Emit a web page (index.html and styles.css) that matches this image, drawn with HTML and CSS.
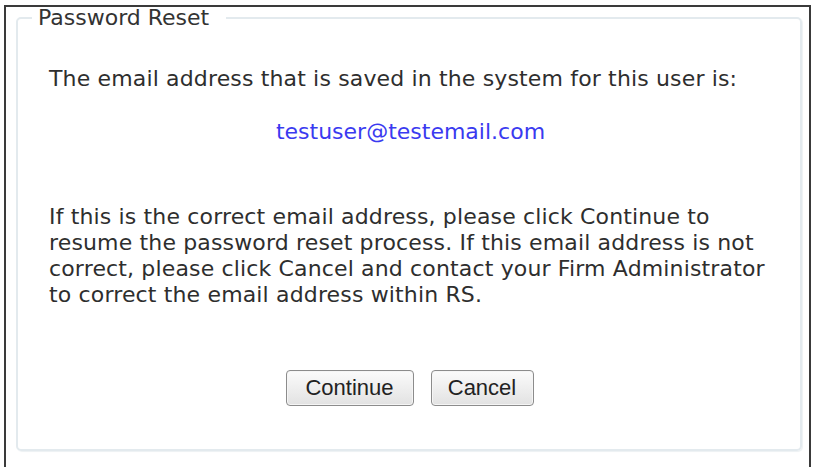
FILE: index.html
```html
<!DOCTYPE html>
<html lang="en">
<head>
<meta charset="utf-8">
<title>Password Reset</title>
<link rel="stylesheet" href="styles.css">
</head>
<body>
<div class="frame">
  <fieldset class="panel">
    <legend class="panel-title">Password Reset</legend>
    <p class="intro">The email address that is saved in the system for this user is:</p>
    <p class="email">testuser@testemail.com</p>
    <p class="notice">If this is the correct email address, please click Continue to<br>resume the password reset process. If this email address is not<br>correct, please click Cancel and contact your Firm Administrator<br>to correct the email address within RS.</p>
    <div class="actions">
      <button class="btn btn-continue" type="button">Continue</button>
      <button class="btn btn-cancel" type="button">Cancel</button>
    </div>
  </fieldset>
</div>
</body>
</html>
```

FILE: styles.css
```css
html, body {
  margin: 0;
  padding: 0;
  background: #ffffff;
}

body {
  font-family: "DejaVu Sans", Verdana, sans-serif;
  color: #2e2e2e;
  overflow: hidden;
}

.frame {
  margin: 5px 0 0 4px;
  width: 807px;
  height: 470px;
  border: 2px solid #3a3a3a;
  border-bottom: none;
  box-sizing: border-box;
  padding: 0 10px 0 10px;
}

.panel {
  margin: 0;
  width: 786px;
  height: 444px;
  box-sizing: border-box;
  border: 2px solid #e3eaee;
  border-radius: 5px;
  box-shadow: 1px 1px 1px #edf1f3;
  padding: 0 28px 0 31px;
}

.panel-title {
  font-size: 22px;
  color: #333333;
  padding: 0 17px 0 6px;
  margin-left: -17px;
  line-height: 22px;
}

.intro,
.email,
.notice {
  font-size: 22px;
  line-height: 26px;
  letter-spacing: 0.15px;
  white-space: nowrap;
}

.intro {
  margin: 37px 0 0 0;
}

.email {
  color: #3a3af0;
  text-align: center;
  margin: 27px 0 0 0;
  letter-spacing: 0;
}

.notice {
  margin: 59px 0 0 0;
}

.actions {
  display: flex;
  justify-content: center;
  gap: 17px;
  margin-top: 62px;
  padding-right: 2px;
}

.btn {
  font-family: "Liberation Sans", Arial, sans-serif;
  font-size: 22px;
  color: #222222;
  height: 36px;
  border: 1px solid #8c8c8c;
  border-radius: 4px;
  background: linear-gradient(#fbfbfb, #e2e2e2);
  box-shadow: inset 0 0 0 1px #f5f5f5;
  padding: 0;
}

.btn-continue {
  width: 128px;
}

.btn-cancel {
  width: 103px;
}
```
